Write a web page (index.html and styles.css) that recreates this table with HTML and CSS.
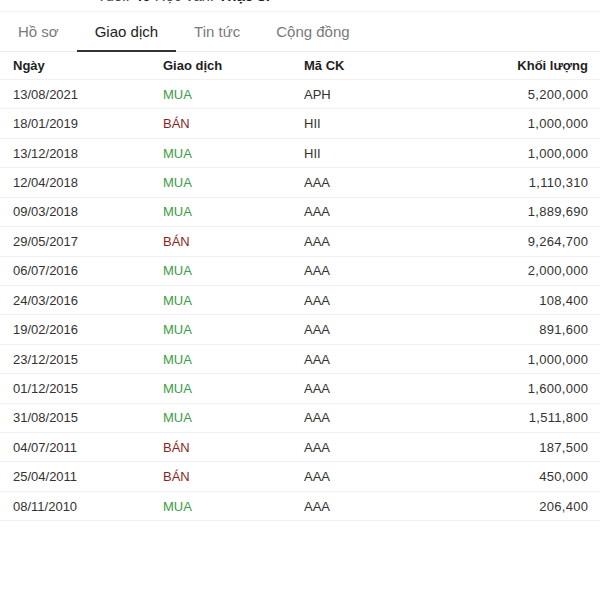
FILE: index.html
```html
<!DOCTYPE html>
<html lang="vi">
<head>
<meta charset="utf-8">
<title>Giao dịch</title>
<link rel="stylesheet" href="styles.css">
</head>
<body>
<div class="info"><p>Tuổi: <b>46</b> Học vấn: <b>Thạc sĩ</b></p></div>
<nav class="tabs">
  <div class="tab">Hồ sơ</div>
  <div class="tab active">Giao dịch</div>
  <div class="tab">Tin tức</div>
  <div class="tab">Cộng đồng</div>
</nav>
<div class="table">
  <div class="row head"><span>Ngày</span><span>Giao dịch</span><span>Mã CK</span><span class="num">Khối lượng</span></div>
  <div class="row"><span>13/08/2021</span><span class="buy">MUA</span><span>APH</span><span class="num">5,200,000</span></div>
  <div class="row"><span>18/01/2019</span><span class="sell">BÁN</span><span>HII</span><span class="num">1,000,000</span></div>
  <div class="row"><span>13/12/2018</span><span class="buy">MUA</span><span>HII</span><span class="num">1,000,000</span></div>
  <div class="row"><span>12/04/2018</span><span class="buy">MUA</span><span>AAA</span><span class="num">1,110,310</span></div>
  <div class="row"><span>09/03/2018</span><span class="buy">MUA</span><span>AAA</span><span class="num">1,889,690</span></div>
  <div class="row"><span>29/05/2017</span><span class="sell">BÁN</span><span>AAA</span><span class="num">9,264,700</span></div>
  <div class="row"><span>06/07/2016</span><span class="buy">MUA</span><span>AAA</span><span class="num">2,000,000</span></div>
  <div class="row"><span>24/03/2016</span><span class="buy">MUA</span><span>AAA</span><span class="num">108,400</span></div>
  <div class="row"><span>19/02/2016</span><span class="buy">MUA</span><span>AAA</span><span class="num">891,600</span></div>
  <div class="row"><span>23/12/2015</span><span class="buy">MUA</span><span>AAA</span><span class="num">1,000,000</span></div>
  <div class="row"><span>01/12/2015</span><span class="buy">MUA</span><span>AAA</span><span class="num">1,600,000</span></div>
  <div class="row"><span>31/08/2015</span><span class="buy">MUA</span><span>AAA</span><span class="num">1,511,800</span></div>
  <div class="row"><span>04/07/2011</span><span class="sell">BÁN</span><span>AAA</span><span class="num">187,500</span></div>
  <div class="row"><span>25/04/2011</span><span class="sell">BÁN</span><span>AAA</span><span class="num">450,000</span></div>
  <div class="row"><span>08/11/2010</span><span class="buy">MUA</span><span>AAA</span><span class="num">206,400</span></div>
</div>
</body>
</html>
```
FILE: styles.css
```css
* { box-sizing: border-box; }
body {
  margin: 0;
  background: #fff;
  font-family: "Liberation Sans", Arial, sans-serif;
  color: #333;
}
.info {
  height: 12px;
  overflow: hidden;
  border-bottom: 1px solid #f2f2f2;
}
.info p {
  margin: -12px 0 0 97px;
  font-size: 15px;
  line-height: 15px;
  color: #444;
}
.info b { color: #222; }
.tabs {
  display: flex;
  height: 40px;
  border-bottom: 1px solid #ececec;
}
.tab {
  display: flex;
  align-items: center;
  padding: 0 18px;
  font-size: 15px;
  color: #7a7a7a;
  border-bottom: 2px solid transparent;
  margin-bottom: -1px;
}
.tab.active {
  color: #222;
  border-bottom-color: #333;
}
.row {
  display: grid;
  grid-template-columns: 150px 141px 1fr auto;
  align-items: center;
  height: 29.43px;
  padding: 0 12px 0 13px;
  border-bottom: 1px solid #f1f1f1;
  font-size: 13px;
  color: #333;
}
.row.head {
  height: 28px;
  font-weight: bold;
  color: #1e1e1e;
}
.num {
  text-align: right;
  letter-spacing: 0.3px;
  margin-right: -0.3px;
}
.row.head .num { letter-spacing: 0; margin-right: 0; }
.buy { color: #3d9c45; }
.sell { color: #8e1f1f; }
```
